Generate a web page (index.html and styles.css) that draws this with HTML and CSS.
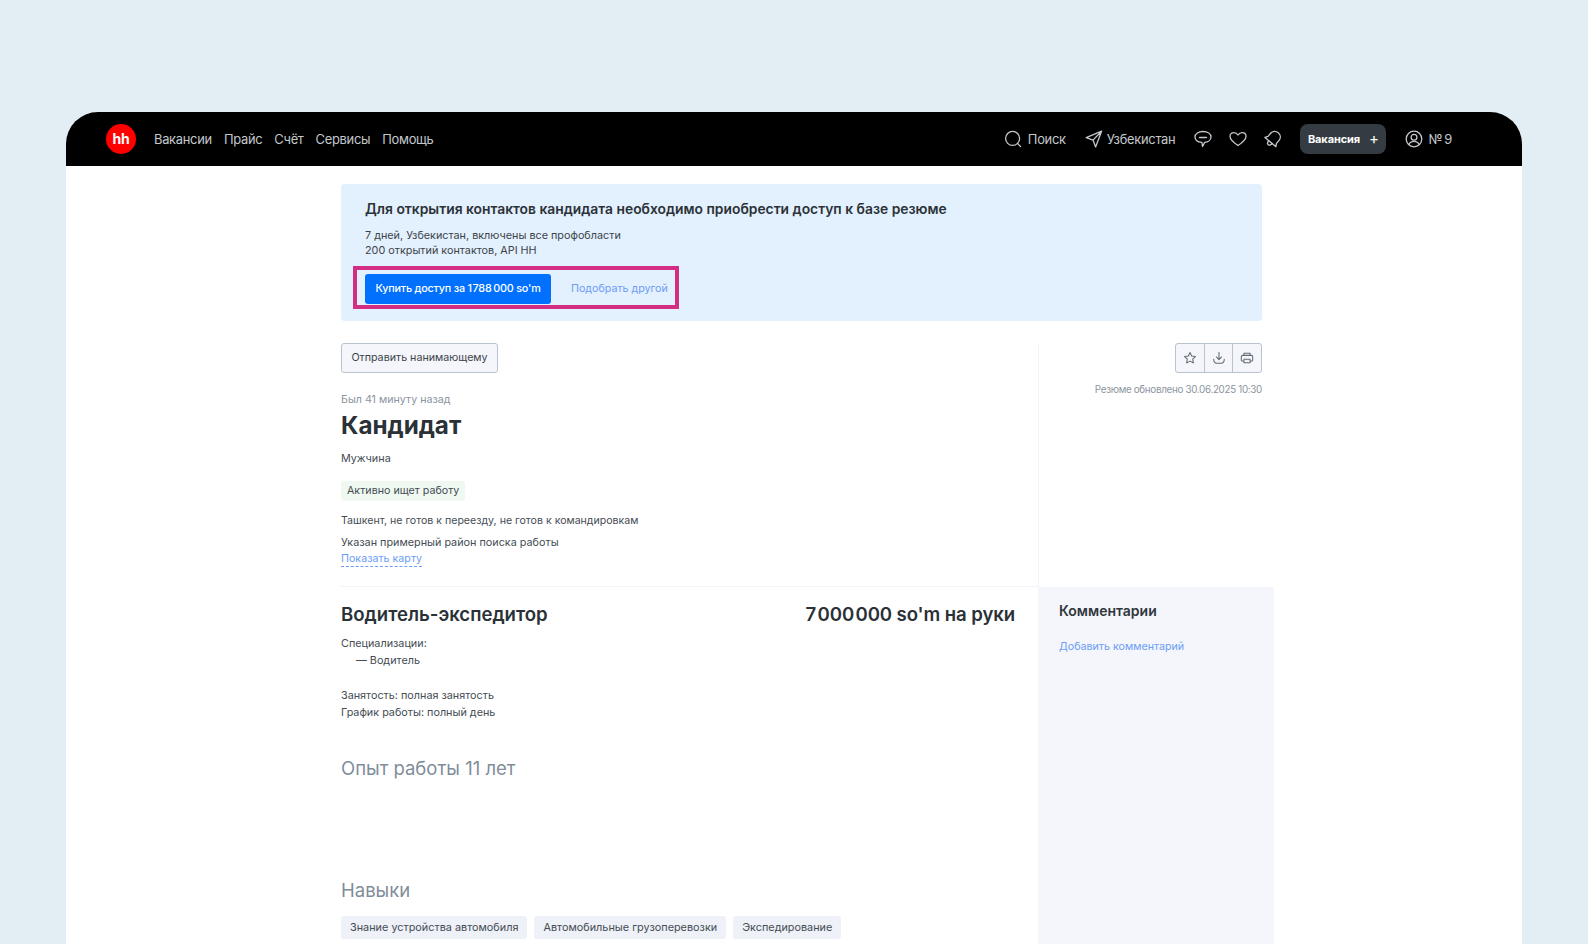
FILE: index.html
```html
<!DOCTYPE html>
<html lang="ru">
<head>
<meta charset="utf-8">
<title>Кандидат</title>
<link rel="stylesheet" href="styles.css">
</head>
<body>
<div class="window">
  <header class="topbar">
    <div class="logo">hh</div>
    <nav class="nav">
      <a>Вакансии</a><a>Прайс</a><a>Счёт</a><a>Сервисы</a><a>Помощь</a>
    </nav>
    <div class="tools">
      <a class="tool tool-search">
        <svg class="ic" viewBox="0 0 18 18"><circle cx="8.600" cy="8.400" r="7"/><path d="M13.600 13.400 16.600 16.600"/></svg>Поиск
      </a>
      <a class="tool tool-region">
        <svg class="ic" viewBox="0 0 18 18"><path d="M16.600 1.200 1.200 7.600l6.800 2.500 2.600 6.800zM8 10.100 16.600 1.200"/></svg>Узбекистан
      </a>
      <svg class="ic ic-chat" viewBox="0 0 18 18"><path d="M9 1.500c4.500 0 8 2 8 5.500 0 3.200-3 5.200-6.300 5.400L8.500 16.500l-.6-4.100C3.800 12.100 1 10.200 1 7c0-3.500 3.500-5.500 8-5.500z"/><path d="M5.500 7.500h7"/></svg>
      <svg class="ic ic-heart" viewBox="0 0 18 18"><path d="M9 15.500C5 12.700 1 9.800 1 6.400 1 4 2.900 2.600 4.900 2.600 6.600 2.600 8 3.500 9 5c1-1.500 2.400-2.400 4.100-2.400 2 0 3.900 1.400 3.900 3.800 0 3.400-4 6.300-8 9.100z"/></svg>
      <svg class="ic ic-bell" viewBox="0 0 18 18"><g transform="rotate(40 9 9)"><path d="M9 .8c3.300 0 5.500 2.400 5.500 5.600v3.800l1.700 2.800H1.800l1.700-2.800V6.400C3.500 3.200 5.700.8 9 .8z"/><path d="M6.800 13c0 2 .8 3.400 2.200 3.400s2.200-1.400 2.200-3.400"/></g></svg>
      <a class="create">Вакансия<span class="plus">+</span></a>
      <a class="tool tool-user">
        <svg class="ic" viewBox="0 0 18 18"><circle cx="9" cy="9" r="7.800"/><circle cx="9" cy="7.200" r="2.900"/><path d="M4 14.500c.8-2.300 2.700-3.200 5-3.200s4.200.9 5 3.200"/></svg>№&#8201;9
      </a>
    </div>
  </header>

  <main class="content">
    <section class="banner">
      <h2 class="banner-title">Для открытия контактов кандидата необходимо приобрести доступ к базе резюме</h2>
      <p class="banner-text">7 дней, Узбекистан, включены все профобласти<br>200 открытий контактов, API HH</p>
      <div class="banner-actions">
        <a class="buy">Купить доступ за 1&#8202;788&#8201;000 so'm</a>
        <a class="link other">Подобрать другой</a>
      </div>
    </section>

    <section class="row row-head">
      <div class="col-main head-main">
        <a class="send">Отправить нанимающему</a>
        <p class="seen">Был 41 минуту назад</p>
        <h1 class="name">Кандидат</h1>
        <p class="txt gender">Мужчина</p>
        <span class="status">Активно ищет работу</span>
        <p class="txt city">Ташкент, не готов к переезду, не готов к командировкам</p>
        <p class="txt area">Указан примерный район поиска работы</p>
        <a class="link map">Показать карту</a>
      </div>
      <aside class="col-side head-side">
        <div class="actions">
          <a class="action"><svg class="ia" viewBox="0 0 16 16"><path d="M8 1.800l1.900 3.900 4.300.6-3.100 3 .7 4.300L8 11.600l-3.800 2 .7-4.300-3.100-3 4.300-.6z"/></svg></a>
          <a class="action"><svg class="ia" viewBox="0 0 16 16"><path d="M8 1.500v8M5 6.800l3 3 3-3M2 9.500c0 2.900 1.500 4.500 3.500 4.500h5c2 0 3.500-1.600 3.500-4.500"/></svg></a>
          <a class="action"><svg class="ia" viewBox="0 0 16 16"><path d="M4.500 5V2.500h7V5M4.500 11.500H2.500c-.6 0-1-.4-1-1V6.500c0-.9.6-1.500 1.500-1.500h10c.9 0 1.500.6 1.500 1.500v4c0 .6-.4 1-1 1h-2M4.500 9.500h7v4h-7z"/></svg></a>
        </div>
        <p class="updated">Резюме обновлено 30.06.2025 10:30</p>
      </aside>
    </section>

    <section class="row row-body">
      <div class="col-main body-main">
        <div class="position">
          <h2 class="pos-title">Водитель-экспедитор</h2>
          <div class="salary">7&#8202;000&#8202;000 so'm на руки</div>
        </div>
        <p class="txt lines">Специализации:</p>
        <p class="txt lines indent">— Водитель</p>
        <p class="txt lines employment">Занятость: полная занятость</p>
        <p class="txt lines">График работы: полный день</p>
        <h3 class="section exp">Опыт работы 11 лет</h3>
        <h3 class="section skills">Навыки</h3>
        <div class="tags">
          <span class="tag">Знание устройства автомобиля</span>
          <span class="tag">Автомобильные грузоперевозки</span>
          <span class="tag">Экспедирование</span>
        </div>
      </div>
      <aside class="col-side comments">
        <h4 class="comments-title">Комментарии</h4>
        <a class="link add">Добавить комментарий</a>
      </aside>
    </section>
  </main>
</div>
</body>
</html>
```
FILE: styles.css
```css
* { box-sizing: border-box; }
html, body { height: 100%; }
body {
  margin: 0;
  overflow: hidden;
  background: #e2edf4;
  font-family: Inter, "Noto Sans", sans-serif;
  color: #31373d;
  padding: 112px 66px 0;
}
p, h1, h2, h3, h4 { margin: 0; }
.window {
  width: 1456px;
  height: 832px;
  background: #fff;
  border-radius: 32px 32px 0 0;
  overflow: hidden;
}
.topbar {
  height: 54px;
  background: #000;
  display: flex;
  align-items: center;
  padding-left: 40px;
  color: #c3c8cc;
  font-size: 12.900px;
  letter-spacing: -.28px;
}
.logo {
  width: 30px;
  height: 30px;
  border-radius: 50%;
  background: #f00;
  color: #fff;
  font-weight: 700;
  font-size: 14px;
  line-height: 29px;
  text-align: center;
  letter-spacing: -.2px;
}
.nav { display: flex; gap: 12px; margin-left: 18px; }
.tools { display: flex; align-items: center; margin-left: auto; padding-right: 70px; }
.tool { display: flex; align-items: center; }
.ic {
  width: 18px;
  height: 18px;
  fill: none;
  stroke: #c3c8cc;
  stroke-width: 1.300;
  stroke-linejoin: round;
  stroke-linecap: round;
  flex: none;
}
.tool-search .ic { margin-right: 6px; }
.tool-region { margin-left: 19px; }
.tool-region .ic { margin-right: 4px; }
.ic-chat { margin-left: 19px; }
.ic-heart { margin-left: 17px; }
.ic-bell { margin-left: 17px; }
.create {
  display: flex;
  align-items: center;
  justify-content: center;
  width: 86px;
  height: 30px;
  margin-left: 18px;
  border-radius: 8px;
  background: #343b43;
  color: #fff;
  font-size: 11px;
  font-weight: 700;
  letter-spacing: -.1px;
}
.plus { margin-left: 9px; padding-bottom: 2px; font-size: 15px; font-weight: 400; line-height: 1; }
.tool-user { margin-left: 19px; }
.tool-user .ic { margin-right: 5px; }

.content { width: 933px; margin-left: 275px; padding-top: 18px; }
.banner {
  width: 921px;
  height: 137px;
  padding: 16px 24px 0;
  background: #e3f0fd;
  border-radius: 4px;
}
.banner-title { font-size: 13.850px; line-height: 18px; font-weight: 600; color: #2b3238; }
.banner-text { margin-top: 10px; font-size: 10.800px; line-height: 15px; color: #3c444b; }
.banner-actions {
  display: flex;
  align-items: center;
  width: 326px;
  height: 43px;
  margin: 8px 0 0 -12px;
  padding: 2px 0 0 8px;
  border: 4px solid #d22f84;
}
.buy {
  display: flex;
  align-items: center;
  justify-content: center;
  width: 186px;
  height: 30px;
  border-radius: 3px;
  background: #0070ff;
  color: #fff;
  font-size: 10.800px;
  font-weight: 500;
  letter-spacing: -.2px;
}
.link { color: #6d9df5; }
.other { margin-left: 20px; font-size: 10.700px; }

.row { display: flex; }
.col-main { width: 697px; }
.col-side { width: 236px; }
.row-head { margin-top: 22px; }
.head-main { height: 244px; border-bottom: 1px solid #f1f3f8; }
.send {
  display: block;
  width: 157px;
  height: 30px;
  border: 1px solid #b9c3cd;
  border-radius: 3px;
  background: #f4f6fb;
  font-size: 10.700px;
  line-height: 28px;
  text-align: center;
  color: #3c444b;
}
.seen { margin-top: 20px; font-size: 10.700px; line-height: 14px; color: #8b95a0; }
.name { margin-top: 4px; font-size: 24.200px; line-height: 30px; font-weight: 700; color: #2a3137; }
.txt { font-size: 10.800px; line-height: 16px; color: #454c53; }
.gender { margin-top: 10px; }
.status {
  display: block;
  width: fit-content;
  margin-top: 14px;
  padding: 0 6px;
  height: 20px;
  border-radius: 3px;
  background: #eff9f2;
  font-size: 10.700px;
  line-height: 19px;
  color: #454c53;
}
.city { margin-top: 12px; font-size: 10.600px; }
.area { margin-top: 6px; }
.map {
  display: block;
  width: fit-content;
  font-size: 10.700px;
  line-height: 14px;
  margin-top: 1px;
  border-bottom: 1px dashed #6d9df5;
}
.head-side { border-left: 1px solid #f1f3f8; width: 224px; display: flex; flex-direction: column; align-items: flex-end; }
.actions {
  display: flex;
  width: 87px;
  height: 30px;
  border: 1px solid #b9c3cd;
  border-radius: 3px;
  background: #f4f6fb;
}
.action { flex: 1; display: flex; align-items: center; justify-content: center; border-left: 1px solid #b9c3cd; }
.action:first-child { border-left: 0; }
.ia {
  width: 14px;
  height: 14px;
  fill: none;
  stroke: #626b73;
  stroke-width: 1.200;
  stroke-linejoin: round;
  stroke-linecap: round;
}
.updated { margin-top: 10px; font-size: 9.800px; line-height: 14px; color: #8b95a0; letter-spacing: -.3px; }

.body-main { padding-right: 23px; padding-top: 15px; height: 360px; }
.position { display: flex; justify-content: space-between; align-items: center; height: 24px; }
.pos-title, .salary { font-size: 18.600px; line-height: 24px; font-weight: 600; color: #2a3137; }
.salary { letter-spacing: -.1px; }
.lines { line-height: 17px; }
.position + .lines { margin-top: 9px; }
.indent { padding-left: 15px; }
.employment { margin-top: 18px; }
.section { font-size: 18.500px; line-height: 24px; font-weight: 400; color: #7f8d9a; }
.exp { margin-top: 35px; }
.skills { margin-top: 98px; }
.tags { display: flex; gap: 7px; margin-top: 14px; }
.tag {
  height: 23px;
  padding: 0 9px;
  border-radius: 3px;
  background: #eef1f8;
  font-size: 10.850px;
  line-height: 22px;
  color: #454c53;
}
.comments { padding: 15px 21px; background: #f4f6fb; height: 360px; }
.comments-title { font-size: 14px; line-height: 18px; font-weight: 600; color: #2f363c; }
.add { display: block; margin-top: 19px; font-size: 10.700px; line-height: 16px; }
```
